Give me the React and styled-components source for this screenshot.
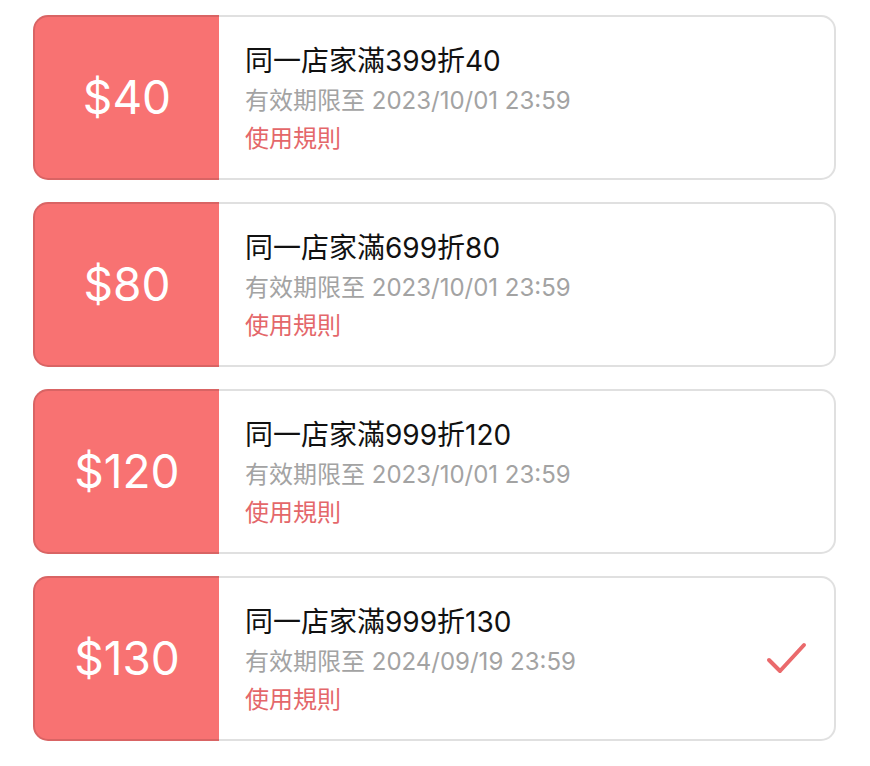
import React from "react";
import styled, { createGlobalStyle } from "styled-components";

const GlobalStyle = createGlobalStyle`
  body {
    margin: 0;
    background: #ffffff;
    font-family: "Inter", "Noto Sans CJK TC", sans-serif;
  }
`;

const coupons = [
  { amount: 40, title: "同一店家滿399折40", expire: "2023/10/01 23:59" },
  { amount: 80, title: "同一店家滿699折80", expire: "2023/10/01 23:59" },
  { amount: 120, title: "同一店家滿999折120", expire: "2023/10/01 23:59" },
  { amount: 130, title: "同一店家滿999折130", expire: "2024/09/19 23:59", selected: true },
];

const List = styled.div`
  display: flex;
  flex-direction: column;
  gap: 22px;
  padding: 15px 34px 0 33px;
`;

const Card = styled.div`
  display: flex;
  height: 165px;
  box-sizing: border-box;
  border: 2px solid rgba(0, 0, 0, 0.12);
  border-radius: 15px;
  overflow: hidden;
  background: linear-gradient(to right, #f87272 0, #f87272 186px, #ffffff 186px) border-box;
`;

const Amount = styled.div`
  width: 184px;
  flex: none;
  display: flex;
  align-items: center;
  justify-content: center;
  color: #ffffff;
  font-size: 46px;
  padding-bottom: 1px;
`;

const Info = styled.div`
  flex: 1;
  display: flex;
  flex-direction: column;
  justify-content: center;
  padding: 3px 0 0 26px;
`;

const Title = styled.div`
  font-size: 28px;
  color: #111111;
  line-height: 40px;
`;

const Expire = styled.div`
  font-size: 24px;
  color: #a3a3a3;
  line-height: 40px;
`;

const Rule = styled.div`
  font-size: 24px;
  color: #e4676a;
  line-height: 36px;
`;

const Check = styled.div`
  display: flex;
  align-items: center;
  padding-right: 26px;
`;

function CheckMark() {
  return (
    <svg width="42" height="36" viewBox="0 0 42 36">
      <path d="M3 19 L14 30 L38 4" fill="none" stroke="#ea6a6c" strokeWidth="4" strokeLinecap="round" strokeLinejoin="round" />
    </svg>
  );
}

export default function App() {
  return (
    <>
      <GlobalStyle />
      <List>
        {coupons.map((c) => (
          <Card key={c.amount}>
            <Amount>${c.amount}</Amount>
            <Info>
              <Title>{c.title}</Title>
              <Expire>有效期限至 {c.expire}</Expire>
              <Rule>使用規則</Rule>
            </Info>
            {c.selected && (
              <Check>
                <CheckMark />
              </Check>
            )}
          </Card>
        ))}
      </List>
    </>
  );
}
